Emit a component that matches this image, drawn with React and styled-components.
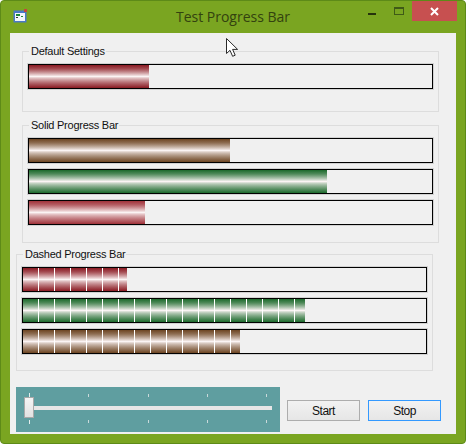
import React from 'react';
import styled, { createGlobalStyle } from 'styled-components';

const GlobalStyle = createGlobalStyle`
  html,
  body {
    margin: 0;
    background: #fff;
    font-family: 'Liberation Sans', Arial, sans-serif;
    font-size: 11px;
  }
`;

const Window = styled.div`
  box-sizing: border-box;
  width: 466px;
  height: 444px;
  display: flex;
  flex-direction: column;
  padding: 0 9px 9px;
  background: #7aa521;
  border: 1px solid #5d8a18;
  border-radius: 4px;
`;

const TitleBar = styled.div`
  display: grid;
  grid-template-columns: 1fr auto 1fr;
  align-items: start;
  height: 32px;
  flex: none;
`;

const AppIcon = styled.svg`
  width: 15px;
  height: 15px;
  margin: 8px 0 0 3px;
`;

const Title = styled.div`
  font-family: 'Open Sans', sans-serif;
  font-size: 14px;
  line-height: 32px;
  color: #33420f;
`;

const Controls = styled.div`
  display: flex;
  justify-content: flex-end;
  align-items: flex-start;
`;

const MinButton = styled.div`
  width: 8px;
  height: 2px;
  margin: 12px 18px 0 0;
  background: #26330c;
`;

const MaxButton = styled.div`
  box-sizing: border-box;
  width: 10px;
  height: 8px;
  margin: 6px 8px 0 0;
  border: 1px solid #3f5a17;
  border-top-width: 2px;
`;

const CloseButton = styled.div`
  width: 45px;
  height: 20px;
  display: flex;
  align-items: center;
  justify-content: center;
  margin-right: -1px;
  background: #c75050;
`;

const Client = styled.div`
  flex: 1;
  display: flex;
  flex-direction: column;
  padding-top: 12px;
  background: #f0f0f0;
`;

const Group = styled.fieldset`
  box-sizing: border-box;
  width: 417px;
  margin: 0 0 ${props => props.$after}px ${props => props.$left}px;
  padding: 6px 5px ${props => props.$bottom}px;
  display: flex;
  flex-direction: column;
  gap: 6px;
  border: 1px solid #dddddd;
  min-inline-size: 0;
`;

const GroupLabel = styled.legend`
  margin-left: 1px;
  padding: 0 1px 0 2px;
  line-height: 13px;
  letter-spacing: -0.25px;
  color: #111;
`;

const Bar = styled.div`
  box-sizing: border-box;
  width: 405px;
  height: 25px;
  border: 1px solid #000;
  background: #f0f0f0;
  box-shadow: 0 0 0 1px rgba(0, 0, 0, 0.12);
`;

const gradients = {
  red: '#8a1a22',
  paleRed: '#a0323a',
  green: '#1c6a2c',
  brown: '#6d4522',
};

const Fill = styled.div`
  height: 100%;
  background: ${props =>
      props.$dashed
        ? 'repeating-linear-gradient(to right, transparent 0, transparent 15px, #fff 15px, #fff 16px),'
        : ''}
    linear-gradient(
      to bottom,
      ${props => gradients[props.$color]} 0,
      30%,
      #fbf4f4 50%,
      70%,
      ${props => gradients[props.$color]} 100%
    );
`;

const Footer = styled.div`
  display: flex;
  align-items: flex-start;
  margin: 0 0 0 6px;
`;

const Slider = styled.div`
  position: relative;
  box-sizing: border-box;
  width: 264px;
  height: 45px;
  padding-top: 5px;
  background: #5f9ea0;
`;

const TickRow = styled.div`
  display: flex;
  justify-content: space-between;
  align-items: ${props => (props.$top ? 'flex-end' : 'flex-start')};
  height: 5px;
  padding: 0 13px;
`;

const Tick = styled.div`
  width: 1px;
  height: ${props => (props.$major ? 4 : 3)}px;
  background: ${props => (props.$major ? '#e4eeee' : '#c9d9da')};
`;

const Track = styled.div`
  height: 4px;
  margin: 9px 8px 10px;
  background: #e6e6e6;
`;

const Thumb = styled.div`
  position: absolute;
  left: 8px;
  top: 10px;
  box-sizing: border-box;
  width: 10px;
  height: 21px;
  border: 1px solid #a9a9a9;
  background: linear-gradient(to bottom, #f4f4f4, #e2e2e2);
`;

const Buttons = styled.div`
  display: flex;
  gap: 8px;
  padding: 13px 0 0 7px;
`;

const Button = styled.button`
  box-sizing: border-box;
  width: 73px;
  height: 21px;
  padding: 0;
  font-family: inherit;
  font-size: 12px;
  letter-spacing: -0.5px;
  color: #111;
  border: 1px solid ${props => (props.$focused ? '#3399ff' : '#adadad')};
  background: linear-gradient(to bottom, #f2f2f2, #e6e6e6);
`;

const Cursor = styled.svg`
  position: absolute;
  left: 226px;
  top: 38px;
  width: 13px;
  height: 19px;
`;

const TICKS = [0, 1, 2, 3, 4];

const ProgressBar = ({ width, color, dashed }) => (
  <Bar>
    <Fill $color={color} $dashed={dashed} style={{ width }} />
  </Bar>
);

const Ticks = ({ top }) => (
  <TickRow $top={top}>
    {TICKS.map(i => (
      <Tick key={i} $major={i === 0} />
    ))}
  </TickRow>
);

export default function App() {
  return (
    <>
      <GlobalStyle />
      <Window>
        <TitleBar>
          <AppIcon viewBox="0 0 15 15">
            <rect x="0.5" y="1.5" width="13" height="12" fill="#4a78c8" />
            <rect x="2" y="4" width="10" height="8" fill="#f4f7fb" />
            <rect x="3" y="5" width="4" height="2" fill="#1f8a3a" />
            <rect x="3" y="8" width="2" height="1" fill="#333" />
            <rect x="8" y="7" width="2" height="1" fill="#1f8a3a" />
            <rect x="11" y="0" width="3" height="3" fill="#c4483c" />
          </AppIcon>
          <Title>Test Progress Bar</Title>
          <Controls>
            <MinButton />
            <MaxButton />
            <CloseButton>
              <svg width="9" height="9" viewBox="0 0 9 9">
                <path d="M1 1l7 7M8 1L1 8" stroke="#fff" strokeWidth="2" />
              </svg>
            </CloseButton>
          </Controls>
        </TitleBar>
        <Client>
          <Group $left={12} $after={7} $bottom={22}>
            <GroupLabel>Default Settings</GroupLabel>
            <ProgressBar width={120} color="red" />
          </Group>
          <Group $left={12} $after={5} $bottom={17}>
            <GroupLabel>Solid Progress Bar</GroupLabel>
            <ProgressBar width={201} color="brown" />
            <ProgressBar width={298} color="green" />
            <ProgressBar width={116} color="paleRed" />
          </Group>
          <Group $left={6} $after={16} $bottom={16}>
            <GroupLabel>Dashed Progress Bar</GroupLabel>
            <ProgressBar width={104} color="red" dashed />
            <ProgressBar width={282} color="green" dashed />
            <ProgressBar width={217} color="brown" dashed />
          </Group>
          <Footer>
            <Slider>
              <Ticks top />
              <Track />
              <Ticks />
              <Thumb />
            </Slider>
            <Buttons>
              <Button>Start</Button>
              <Button $focused>Stop</Button>
            </Buttons>
          </Footer>
        </Client>
      </Window>
      <Cursor viewBox="0 0 13 19">
        <path
          d="M0.5 0.5v15l3.5-3.2 2.6 6 2.6-1.1-2.6-5.8h5z"
          fill="#fff"
          stroke="#2a2a2a"
          strokeWidth="1"
        />
      </Cursor>
    </>
  );
}
